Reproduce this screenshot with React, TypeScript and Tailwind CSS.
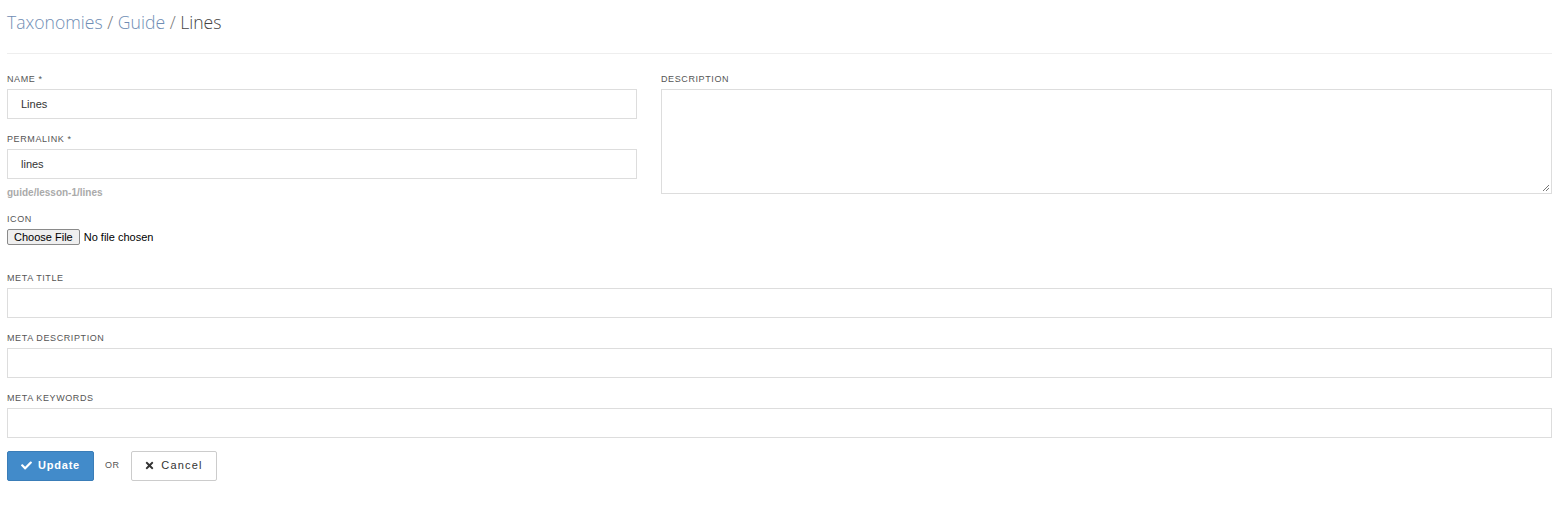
import React from "react";
import { FaCheck, FaTimes } from "react-icons/fa";

const Label = ({ children }: { children: React.ReactNode }) => (
  <div className="text-[9px] leading-[11px] uppercase tracking-[0.6px] text-[#555] mb-[4px]">{children}</div>
);

const Input = ({ value }: { value?: string }) => (
  <div className="h-[30px] border border-[#ddd] bg-white flex items-center pl-[13px] text-[11px] text-[#333]">
    {value}
  </div>
);

export default function App() {
  return (
    <div className="bg-white min-h-[508px] w-[1568px] pl-[7px] pr-[16px] pt-[9px] font-['Liberation_Sans',Arial,sans-serif]">
      <div className="font-['Open_Sans',sans-serif] font-light text-[17.6px] leading-[26px] text-[#444]">
        <span className="text-[#6f8db4]">Taxonomies</span>
        <span className="text-[#777]"> / </span>
        <span className="text-[#6f8db4]">Guide</span>
        <span className="text-[#777]"> / </span>
        <span className="text-[#444]">Lines</span>
      </div>
      <div className="h-px bg-[#eee] mt-[18px] mb-[20px]" />
      <div className="flex gap-[24px]">
        <div className="w-[630px] flex flex-col">
          <Label>Name *</Label>
          <Input value="Lines" />
          <div className="mt-[15px]">
            <Label>Permalink *</Label>
            <Input value="lines" />
          </div>
          <div className="text-[10px] leading-[12px] font-bold text-[#aaa] mt-[8px]">guide/lesson-1/lines</div>
          <div className="mt-[15px]">
            <Label>Icon</Label>
            <div className="flex items-center gap-[4px]">
              <div className="h-[16px] px-[6px] flex items-center border border-[#8a8a8a] bg-[#efefef] rounded-[2px] text-[11px] text-black">
                Choose File
              </div>
              <span className="text-[11px] text-black">No file chosen</span>
            </div>
          </div>
        </div>
        <div className="flex-1 flex flex-col">
          <Label>Description</Label>
          <div className="h-[105px] border border-[#ddd] relative">
            <svg className="absolute right-[1px] bottom-[1px]" width="8" height="8" viewBox="0 0 8 8">
              <path d="M7 1 L1 7 M7 4 L4 7" stroke="#777" strokeWidth="1" />
            </svg>
          </div>
        </div>
      </div>
      <div className="mt-[27px] flex flex-col">
        <Label>Meta Title</Label>
        <Input />
        <div className="mt-[15px]">
          <Label>Meta Description</Label>
          <Input />
        </div>
        <div className="mt-[15px]">
          <Label>Meta Keywords</Label>
          <Input />
        </div>
      </div>
      <div className="flex items-center mt-[13px]">
        <div className="w-[87px] h-[30px] bg-[#428bca] border border-[#3a7db8] rounded-[2px] flex items-center justify-center gap-[6px] text-white text-[11px] font-bold tracking-[0.8px]">
          <FaCheck className="w-[11px] h-[11px]" />
          Update
        </div>
        <span className="ml-[11px] mr-[11px] text-[9px] text-[#555] tracking-[0.5px]">OR</span>
        <div className="w-[86px] h-[30px] bg-white border border-[#ccc] rounded-[2px] flex items-center justify-center gap-[6px] text-[#333] text-[11px] tracking-[1.2px]">
          <FaTimes className="w-[11px] h-[11px]" />
          Cancel
        </div>
      </div>
    </div>
  );
}
